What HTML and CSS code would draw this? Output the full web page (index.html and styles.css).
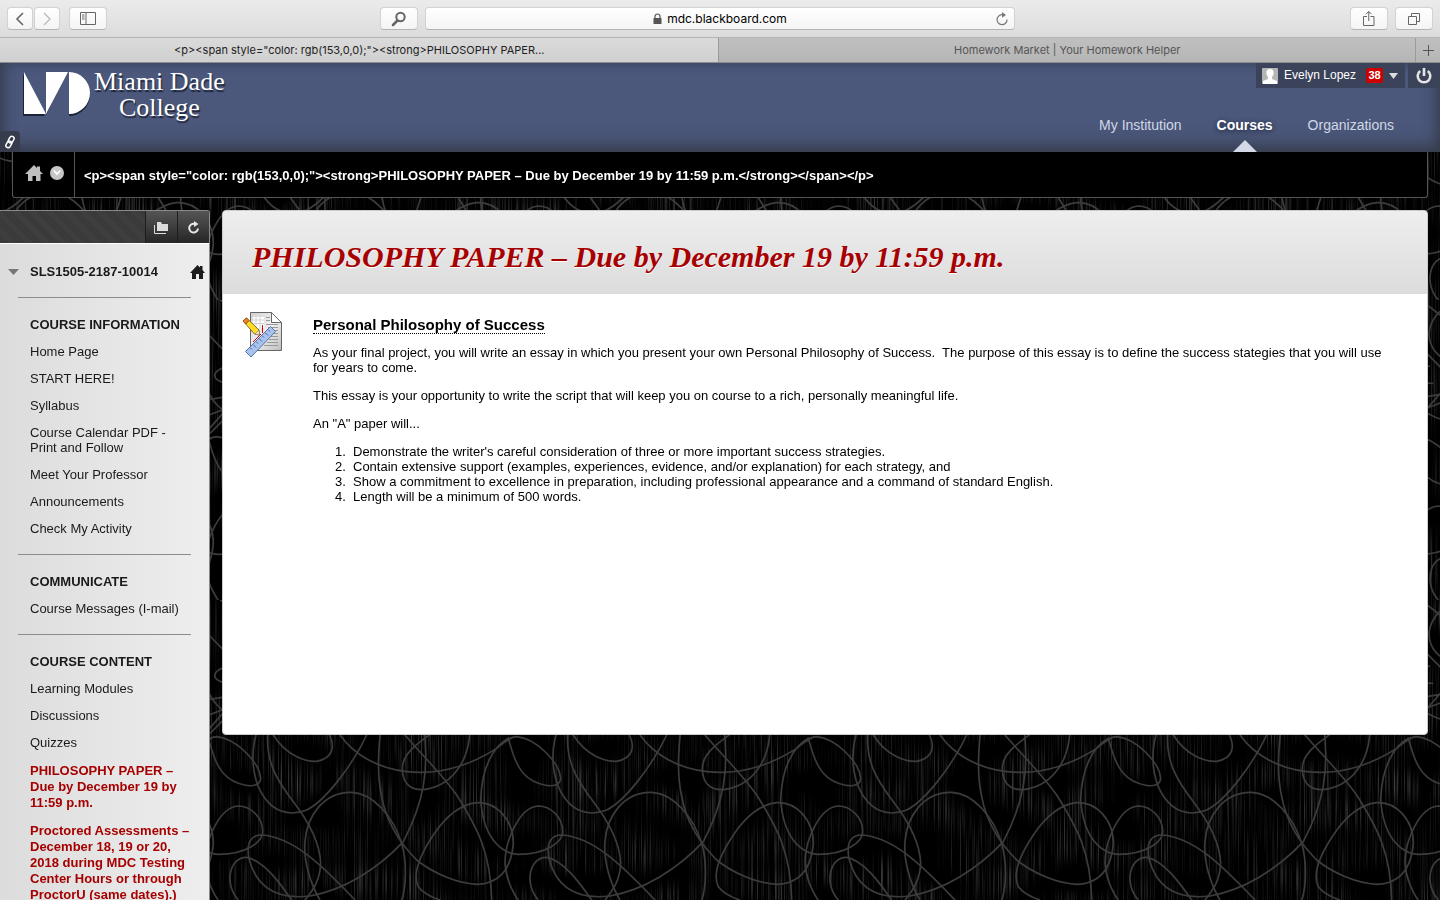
FILE: index.html
```html
<!DOCTYPE html>
<html lang="en">
<head>
<meta charset="utf-8">
<title>Philosophy Paper</title>
<link rel="stylesheet" href="styles.css">
</head>
<body>
<svg class="backdrop" aria-hidden="true">
  <defs>
    <filter id="streaks" x="0" y="0" width="100%" height="100%" color-interpolation-filters="sRGB">
      <feTurbulence type="fractalNoise" baseFrequency="0.7 0.012" numOctaves="1" seed="4" result="fine"/>
      <feColorMatrix in="fine" type="matrix" values="0 0 0 0 .25  0 0 0 0 .25  0 0 0 0 .25  3 0 0 0 -1.4" result="lines"/>
      <feTurbulence type="fractalNoise" baseFrequency="0.02 0.03" numOctaves="1" seed="9" result="coarse"/>
      <feColorMatrix in="coarse" type="matrix" values="0 0 0 0 0  0 0 0 0 0  0 0 0 0 0  0 3 0 0 -1" result="mask"/>
      <feComposite in="lines" in2="mask" operator="in"/>
    </filter>
    <g id="loops">
      <path d="M390,45C480,170 680,200 860,85C890,60 905,50 920,50C980,55 1050,130 1052,175C1050,215 970,195 940,160C915,130 905,90 895,55C850,80 815,140 812,240C820,350 870,400 925,403C1010,403 1058,365 1058,335C1058,290 1020,258 985,258C930,260 885,360 885,430C890,490 915,530 945,570"/>
      <path d="M150,10C120,80 125,150 145,200C180,280 240,290 290,270C350,240 430,130 470,45L500,-30"/>
      <path d="M176,10C160,120 200,180 250,245C300,310 330,370 332,430C330,480 310,510 285,540"/>
      <path d="M330,540C300,490 280,420 285,365C290,290 340,215 425,217C490,220 550,290 575,370C590,420 590,500 575,540"/>
      <path d="M170,10L190,45C230,110 290,125 320,124C370,115 375,80 358,45"/>
      <path d="M515,0C505,90 500,160 515,230C530,310 570,370 620,420C670,460 740,490 800,493C880,490 905,430 910,370C910,300 860,245 800,248C740,255 700,300 670,345C620,420 610,470 625,500C640,520 660,530 690,540"/>
      <path d="M550,0L585,45C640,110 690,155 740,225C800,320 845,400 845,550"/>
      <path d="M710,10C600,80 575,110 577,150C580,200 610,210 640,209C720,200 780,130 780,20"/>
      <path d="M640,10C660,150 640,250 580,365C500,450 400,510 300,528C200,540 140,500 118,420C105,360 130,345 155,345C250,350 340,440 435,540"/>
      <path d="M85,540C40,490 60,410 110,412C160,420 210,490 245,540"/>
      <path d="M-20,-400L110,-300M-10,-262L50,-200L110,-140M60,-162C-5,-150 0,-110 70,-110M-10,-60L110,-80M-10,-12L100,-55M-10,35L100,-90M100,0C30,-20 0,-60 -20,-120M110,-340C40,-300 40,-210 110,-180M0,40L50,-10"/>
    </g>
    <pattern id="swirl" x="210" y="600" width="300" height="300" patternUnits="userSpaceOnUse">
      <g transform="scale(.33333)" fill="none" stroke="#3c3c3c" stroke-width="5">
        <use href="#loops" y="360"/>
        <use href="#loops" x="-900" y="360"/>
        <use href="#loops" x="900" y="360"/>
      </g>
    </pattern>
  </defs>
  <rect width="100%" height="100%" filter="url(#streaks)"/>
  <rect width="100%" height="100%" fill="url(#swirl)"/>
</svg>

<div class="browser">
  <div class="toolbar">
    <div class="tools">
      <div class="pair">
        <button class="tool small" aria-label="Back"><svg width="10" height="14" viewBox="0 0 10 14"><path d="M8 1L2 7l6 6" fill="none" stroke="#666" stroke-width="1.6"/></svg></button>
        <button class="tool small" aria-label="Forward"><svg width="10" height="14" viewBox="0 0 10 14"><path d="M2 1l6 6-6 6" fill="none" stroke="#bbb" stroke-width="1.4"/></svg></button>
      </div>
      <button class="tool" aria-label="Sidebar"><svg width="16" height="13" viewBox="0 0 16 13"><path d="M.5.5h15v12H.5zM6 .5v12M2 3h2.500M2 5h2.500M2 7h2.500" fill="none" stroke="#666"/></svg></button>
    </div>
    <div class="address">
      <button class="tool" aria-label="Search"><svg width="16" height="16" viewBox="0 0 16 16"><circle cx="9.500" cy="6" r="4.200" fill="none" stroke="#666" stroke-width="2"/><path d="M6.500 9.500L2 14" stroke="#666" stroke-width="2.600" stroke-linecap="round"/></svg></button>
      <div class="url"><svg width="9" height="12" viewBox="0 0 9 12"><path d="M2 6V3.500a2.500 2.500 0 0 1 5 0V6" fill="none" stroke="#555" stroke-width="1.200"/><rect x=".5" y="5" width="8" height="6" rx=".6" fill="#555"/></svg><span>mdc.blackboard.com</span>
        <button class="reload" aria-label="Reload"><svg width="14" height="16" viewBox="0 0 14 16"><path d="M8 3.800A5 5 0 1 0 12 8.500" fill="none" stroke="#777" stroke-width="1.200"/><path d="M7 1l4 3-4 2.800z" fill="#777"/></svg></button>
      </div>
    </div>
    <div class="tools end">
      <button class="tool" aria-label="Share"><svg width="14" height="17" viewBox="0 0 14 17"><path d="M5 6.500H1.500v9h10.500v-9H8.500M6.750 11V1.500M4 4.200l2.750-2.800L9.500 4.200" fill="none" stroke="#666"/></svg></button>
      <button class="tool" aria-label="Tabs"><svg width="14" height="14" viewBox="0 0 14 14"><path d="M1.500 4.500h8v8h-8zM4.500 4V1.500h8v8H10" fill="none" stroke="#666"/></svg></button>
    </div>
  </div>
  <div class="tabs">
    <button class="tab active">&lt;p&gt;&lt;span style="color: rgb(153,0,0);"&gt;&lt;strong&gt;PHILOSOPHY PAPER...</button>
    <button class="tab">Homework Market | Your Homework Helper</button>
    <button class="newtab" aria-label="New tab"><svg width="11" height="11" viewBox="0 0 11 11"><path d="M5.500 0v11M0 5.500h11" stroke="#555"/></svg></button>
  </div>
</div>

<header class="banner">
  <a class="logo" href="#">
    <svg width="69" height="46" viewBox="0 0 69 46"><g fill="#1c2438" transform="translate(-1 1)"><path d="M1 2v42h22zM24 2h20L24 43zM47 2a21 21 0 0 1 0 42z"/></g><path d="M1 1v42h22zM23 1h22L23 43zM46 1a21 21 0 0 1 0 42z" fill="#fff"/></svg>
    <span class="wordmark">Miami Dade<br>College</span>
  </a>
  <button class="quick" aria-label="Quick links"><svg width="12" height="14" viewBox="0 0 12 14"><g fill="none" stroke="#fff" stroke-width="1.500"><rect x="5" y="1" width="4.500" height="7" rx="2.200" transform="rotate(30 7 4.500)"/><rect x="2.500" y="6" width="4.500" height="7" rx="2.200" transform="rotate(30 5 9.500)"/></g></svg></button>
  <div class="right">
    <div class="account">
      <button class="user">
        <svg width="16" height="16" viewBox="0 0 16 16"><rect width="16" height="16" rx="1" fill="#b5b5b5"/><path d="M8 1c5 0 4 6 2 8v2l5 2v3H1v-3l5-2V9C4 7 3 1 8 1z" fill="#fff"/></svg>
        <span>Evelyn Lopez</span><span class="count">38</span>
        <svg width="9" height="6" viewBox="0 0 9 6"><path d="M0 0h9L4.500 6z" fill="#ddd"/></svg>
      </button>
      <button class="power" aria-label="Log out"><svg width="18" height="18" viewBox="0 0 18 18"><path d="M5.200 4A6.300 6.300 0 1 0 12.800 4M9 1v8" fill="none" stroke="#e4e4e4" stroke-width="2.600"/></svg></button>
    </div>
    <nav class="main"><a href="#">My Institution</a><a class="on" href="#">Courses</a><a href="#">Organizations</a></nav>
  </div>
</header>

<div class="crumbs">
  <div class="home">
    <a href="#" aria-label="Home"><svg width="18" height="16" viewBox="0 0 18 16"><path d="M9 0l3 3V1.500h3V6l3 3h-2.500v7H11v-5H7.500v5H3V9H0z" fill="#bfbfbf"/></svg></a>
    <button aria-label="Courses menu"><svg width="14" height="14" viewBox="0 0 14 14"><circle cx="7" cy="7" r="7" fill="#c6c6c6"/><path d="M3 5l1.500-1L7 6.500 9.500 4 11 5 7 9.500z" fill="#fff"/></svg></button>
  </div>
  <span class="path">&lt;p&gt;&lt;span style="color: rgb(153,0,0);"&gt;&lt;strong&gt;PHILOSOPHY PAPER – Due by December 19 by 11:59 p.m.&lt;/strong&gt;&lt;/span&gt;&lt;/p&gt;</span>
</div>

<div class="columns">
  <aside class="side">
    <div class="sidebar-tools">
      <button aria-label="Folder view"><svg width="15" height="13" viewBox="0 0 15 13"><path d="M.5 4v8.500H12" fill="none" stroke="#ddd"/><path d="M3 1h4l1 2h6v7H3z" fill="#ddd"/></svg></button>
      <button aria-label="Refresh"><svg width="13" height="13" viewBox="0 0 13 13"><path d="M7.500 2.800A4.400 4.400 0 1 0 11 7.500" fill="none" stroke="#e8e8e8" stroke-width="2"/><path d="M7 0l4.500 3L7 6z" fill="#e8e8e8"/></svg></button>
    </div>
    <div class="menu">
      <div class="course"><svg width="11" height="6" viewBox="0 0 11 6"><path d="M0 0h11L5.500 6z" fill="#777"/></svg><h2>SLS1505-2187-10014</h2><a href="#" aria-label="Course home"><svg width="15" height="14" viewBox="0 0 15 14"><path d="M7.500 0l2.500 2.500V1h2.500v4L15 8h-2v6H9V9H6v5H2V8H0z" fill="#1c1c1c"/></svg></a></div>
      <section><h3>COURSE INFORMATION</h3>
        <ul><li><a href="#">Home Page</a></li><li><a href="#">START HERE!</a></li><li><a href="#">Syllabus</a></li><li><a href="#">Course Calendar PDF -<br>Print and Follow</a></li><li><a href="#">Meet Your Professor</a></li><li><a href="#">Announcements</a></li><li><a href="#">Check My Activity</a></li></ul>
      </section>
      <section><h3>COMMUNICATE</h3>
        <ul><li><a href="#">Course Messages (I-mail)</a></li></ul>
      </section>
      <section><h3>COURSE CONTENT</h3>
        <ul><li><a href="#">Learning Modules</a></li><li><a href="#">Discussions</a></li><li><a href="#">Quizzes</a></li></ul>
        <ul class="alerts"><li><a href="#">PHILOSOPHY PAPER –<br>Due by December 19 by<br>11:59 p.m.</a></li><li><a href="#">Proctored Assessments –<br>December 18, 19 or 20,<br>2018 during MDC Testing<br>Center Hours or through<br>ProctorU (same dates).)</a></li></ul>
      </section>
    </div>
  </aside>
  <main class="panel">
    <h1>PHILOSOPHY PAPER – Due by December 19 by 11:59 p.m.</h1>
    <article>
      <svg class="doc" width="42" height="46" viewBox="0 0 42 46">
        <defs><linearGradient id="paper" x1="0" y1="0" x2="1" y2="1"><stop offset="0" stop-color="#d0d0d0"/><stop offset=".5" stop-color="#f0f0f0"/><stop offset="1" stop-color="#bdbdbd"/></linearGradient></defs>
        <path d="M8.500 1.500h21l10 10v28h-31z" fill="url(#paper)" stroke="#666"/>
        <path d="M29.500 1.500v10h10z" fill="#fff" stroke="#666"/>
        <path d="M11 6h11v11H11z" fill="#fff"/><path d="M11 9h11M11 12.500h11M14 6v11M18 6v11" stroke="#d0d0d0"/>
        <path d="M24 6.500h4M24 9.500h4M24 13.500h12M26 16.500h10M29 19.500h7M30 22.500h6M29 25.500h7M27 28.500h9M25 31.500h11M22 34.500h14" stroke="#999"/>
        <path d="M20.500 14v8M11 31l8-8" stroke="#c00"/>
        <path d="M28.500 15.500l5 5L9 46l-5.500-5.500z" fill="#a9c3ef" stroke="#5573aa"/>
        <path d="M26 18.500l2 2M23 21.500l3 3M20 24.500l2 2M17 27.500l3 3M14 30.500l2 2M11 33.500l3 3M8 36.500l2 2" stroke="#4e6594"/>
        <path d="M1 10l3.500-3L17 19l.5 5-5-1z" fill="#ffdc28" stroke="#8b6d1c"/><path d="M1 10l3.500-3 2.500 2.500L4 13z" fill="#ed8124" stroke="#a65612"/><path d="M13 23l4-4 .5 5z" fill="#f7e2bd" stroke="#777" stroke-width=".6"/>
      </svg>
      <div class="text">
        <h2>Personal Philosophy of Success</h2>
        <p>As your final project, you will write an essay in which you present your own Personal Philosophy of Success.&nbsp; The purpose of this essay is to define the success stategies that you will use for years to come.</p>
        <p>This essay is your opportunity to write the script that will keep you on course to a rich, personally meaningful life.</p>
        <p>An "A" paper will...</p>
        <ol><li>Demonstrate the writer's careful consideration of three or more important success strategies.</li><li>Contain extensive support (examples, experiences, evidence, and/or explanation) for each strategy, and</li><li>Show a commitment to excellence in preparation, including professional appearance and a command of standard English.</li><li>Length will be a minimum of 500 words.</li></ol>
      </div>
    </article>
  </main>
</div>
</body>
</html>
```
FILE: styles.css
```css
* { box-sizing: border-box; }
body {
  margin: 0;
  height: 100vh;
  overflow: hidden;
  display: flex;
  flex-direction: column;
  background: #000;
  color: #000;
  font: 13px/15px "Liberation Sans", Arial, sans-serif;
}
a { color: inherit; text-decoration: none; }
button { margin: 0; padding: 0; border: 0; background: none; font: inherit; color: inherit; }
svg { display: block; flex: none; }
h1, h2, h3, p, ul { margin: 0; padding: 0; }
ul { list-style: none; }

.backdrop { position: fixed; inset: 0; width: 100%; height: 100%; z-index: -1; }

/* Browser window */
.browser { flex: none; font-family: Inter, Roboto, sans-serif; }
.toolbar {
  display: grid;
  grid-template-columns: 373fr 635fr 418fr;
  align-items: center;
  height: 38px;
  padding: 0 7px;
  border-bottom: 1px solid #b4b4b4;
  background: linear-gradient(#ebebeb, #dcdcdc);
}
.tools, .pair, .address { display: flex; }
.tools { gap: 9px; }
.tools.end { justify-content: flex-end; gap: 7px; }
.pair { gap: 1px; }
.address { gap: 7px; }
.tool, .url {
  display: flex;
  align-items: center;
  justify-content: center;
  height: 23px;
  border: 1px solid #d2d2d2;
  border-bottom-color: #b5b5b5;
  border-radius: 4px;
  background: linear-gradient(#fff, #f4f4f4);
}
.tool { width: 38px; flex: none; }
.tool.small { width: 26px; }
.url { position: relative; flex: 1; gap: 5px; }
.url span { font-size: 12px; }
.reload { position: absolute; right: 5px; }
.tabs {
  display: flex;
  height: 25px;
  border-bottom: 1px solid #8d8d8d;
  background: linear-gradient(#c0c0c0, #b5b5b5);
  font-size: 11px;
}
.tab { flex: 1 0 0; color: #555; border-right: 1px solid #9a9a9a; }
.tab.active { flex-grow: 1.033; background: linear-gradient(#dadada, #d0d0d0); color: #222; }
.newtab { display: flex; align-items: center; justify-content: center; width: 24px; }

/* College banner */
.banner {
  position: relative;
  flex: none;
  display: flex;
  justify-content: space-between;
  height: 89px;
  background: #4b587b;
  box-shadow: inset 0 -12px 18px -6px #363b49, inset 12px 0 14px -8px #3b4257, inset -12px 0 14px -8px #3b4257, inset 0 6px 8px -4px #434f6b;
}
.logo { display: flex; gap: 2px; padding: 8px 0 0 23px; color: #fff; }
.wordmark {
  margin-top: -2px;
  font: 26px/26px "Liberation Serif", serif;
  text-align: center;
  text-shadow: 1px 2px 1px #1c2438;
}
.quick {
  position: absolute;
  left: 0;
  bottom: 0;
  display: flex;
  align-items: center;
  justify-content: center;
  width: 20px;
  height: 21px;
  border-radius: 0 4px 0 0;
  background: #363c4c;
}
.right { display: flex; flex-direction: column; justify-content: space-between; align-items: flex-end; }
.account { display: flex; gap: 3px; }
.user, .power { display: flex; align-items: center; height: 25px; background: #3b435a; }
.user { gap: 6px; padding: 0 7px 0 6px; font-size: 12px; color: #fff; }
.count { width: 17px; margin: 0 0 0 4px; border-radius: 2px; background: #c00; font-size: 11px; font-weight: bold; }
.power { width: 32px; justify-content: center; }
.main { display: flex; gap: 35px; padding-right: 46px; font-size: 14px; color: #d0d7e6; }
.main a { height: 34px; }
.main .on { position: relative; color: #fff; font-weight: bold; text-shadow: 0 1px 5px #1c2235; }
.main .on::after {
  content: "";
  position: absolute;
  left: 50%;
  bottom: 0;
  margin-left: -12px;
  border: 12px solid transparent;
  border-top: 0;
  border-bottom-color: #d3d9e6;
}

/* Breadcrumb */
.crumbs {
  flex: none;
  display: flex;
  align-items: center;
  height: 46px;
  margin: 0 12px 12px;
  border: 1px solid #555;
  border-top: 0;
  border-radius: 0 0 3px 3px;
  background: #000;
  color: #fff;
}
.home { display: flex; align-items: center; align-self: stretch; gap: 7px; width: 62px; padding: 0 0 3px 12px; border-right: 1px solid #555; }
.path { padding: 2px 0 0 9px; font-weight: bold; white-space: nowrap; }

/* Course menu and content */
.columns { display: flex; flex: 1; align-items: flex-start; gap: 12px; min-height: 0; padding-right: 12px; }
.side {
  flex: none;
  width: 210px;
  border: 1px solid #8a8a8a;
  border-width: 1px 1px 0 0;
  border-radius: 0 3px 0 0;
  background: linear-gradient(90deg, #dcdcdc, #eee);
  color: #1a1a1a;
}
.sidebar-tools {
  display: flex;
  justify-content: flex-end;
  height: 33px;
  border-bottom: 1px solid #fff;
  background: repeating-linear-gradient(45deg, #3a3a3a 0 6px, #3e3e3e 6px 12px);
}
.sidebar-tools button {
  display: flex;
  align-items: center;
  justify-content: center;
  width: 32px;
  border-left: 1px solid #1e1e1e;
  background: linear-gradient(#555, #262626);
}
.menu { padding: 20px 18px 18px; }
.course { display: flex; align-items: center; gap: 11px; margin: 0 -14px 18px -10px; }
.course h2, .menu h3 { font-size: 13px; line-height: 15px; }
.course h2 { flex: 1; white-space: nowrap; }
.menu section { padding: 19px 0 18px 12px; border-top: 1px solid #8c8c8c; }
.menu li { margin-top: 12px; white-space: nowrap; }
.menu .alerts { padding-top: 1px; color: #a60000; font-weight: bold; line-height: 16px; }
.panel { flex: 1; min-width: 0; min-height: 525px; border: 1px solid #ccc; border-radius: 4px; background: #fff; overflow: hidden; }
.panel h1 {
  padding: 30px 29px 21px;
  background: linear-gradient(#eee, #dcdcdc);
  color: #a60000;
  font: italic bold 30px/32px "Liberation Serif", serif;
  text-shadow: 0 1px 0 #fff;
}
article { display: flex; gap: 29px; padding: 17px 40px 17px 19px; }
.text { flex: 1; min-width: 0; padding-top: 5px; }
.text h2 { display: inline-block; margin-bottom: 11px; border-bottom: 1px dotted #000; font-size: 15px; line-height: 17px; }
.text p { margin-bottom: 13px; }
.text ol { margin: 0; padding-left: 40px; }
.text li::marker { content: counter(list-item) ".\00a0\00a0"; }
```
